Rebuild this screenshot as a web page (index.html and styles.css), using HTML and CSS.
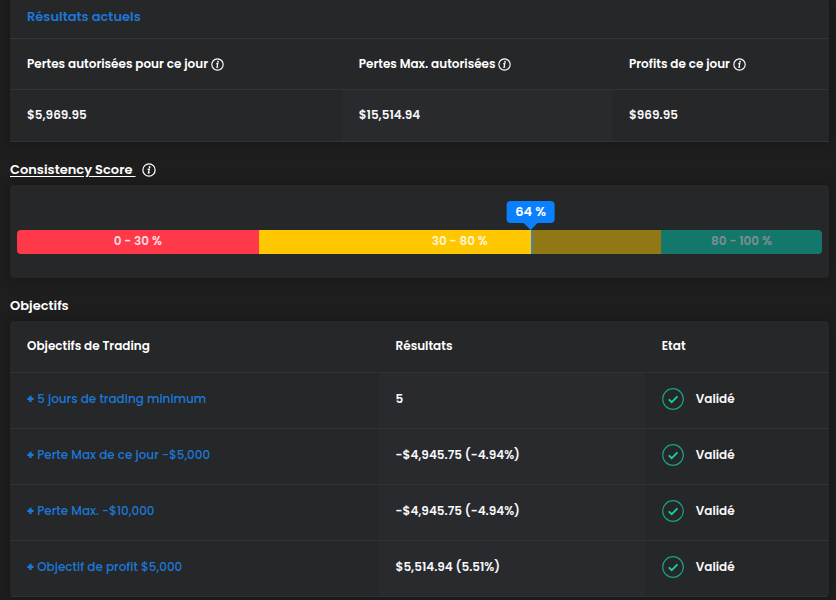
FILE: index.html
```html
<!DOCTYPE html>
<html lang="fr">
<head>
    <meta charset="UTF-8">
    <meta name="viewport" content="width=device-width, initial-scale=1.0">
    <title>Objectifs</title>
    <link rel="stylesheet" href="styles.css">
</head>
<body>
    <svg class="sprite" aria-hidden="true">
        <symbol id="info" viewBox="0 0 16 16">
            <circle cx="8" cy="8" r="7" fill="none" stroke="currentColor" stroke-width="1.4"/>
            <circle cx="8.6" cy="4.6" r="1.1" fill="currentColor"/>
            <path d="M6.4 7.2l2-.4-1.1 4.6 1.6-.4" fill="none" stroke="currentColor" stroke-width="1.4"/>
        </symbol>
        <symbol id="check" viewBox="0 0 22 22">
            <circle cx="11" cy="11" r="10.3" fill="none" stroke="#1c9c84" stroke-width="1.2"/>
            <path d="M6.8 11.3l2.9 2.9 5.8-5.8" fill="none" stroke="#10d5a5" stroke-width="1.8"/>
        </symbol>
    </svg>

    <div class="container">
        <section class="card card-results">
            <h2 class="card-title">Résultats actuels</h2>
            <table class="results">
                <thead>
                    <tr>
                        <th>Pertes autorisées pour ce jour <svg class="info"><use href="#info"/></svg></th>
                        <th>Pertes Max. autorisées <svg class="info"><use href="#info"/></svg></th>
                        <th>Profits de ce jour <svg class="info"><use href="#info"/></svg></th>
                    </tr>
                </thead>
                <tbody>
                    <tr>
                        <td>$5,969.95</td>
                        <td>$15,514.94</td>
                        <td>$969.95</td>
                    </tr>
                </tbody>
            </table>
        </section>

        <h3 class="heading"><span class="underline">Consistency Score&nbsp;</span> <svg class="info info-lg"><use href="#info"/></svg></h3>
        <section class="card card-score">
            <div class="bar">
                <div class="part low" style="width: 30%">0 - 30 %</div>
                <div class="part mid" style="width: 50%">30 - 80 %</div>
                <div class="part high" style="width: 20%">80 - 100 %</div>
                <div class="rest" style="left: 63.8%"></div>
                <div class="score" style="left: 63.8%">64 %</div>
            </div>
        </section>

        <h3 class="heading">Objectifs</h3>
        <section class="card">
            <table class="goals">
                <thead>
                    <tr>
                        <th>Objectifs de Trading</th>
                        <th>Résultats</th>
                        <th>Etat</th>
                    </tr>
                </thead>
                <tbody>
                    <tr>
                        <td><a href="#"><b>+</b> 5 jours de trading minimum</a></td>
                        <td>5</td>
                        <td><div class="state"><svg class="check"><use href="#check"/></svg>Validé</div></td>
                    </tr>
                    <tr>
                        <td><a href="#"><b>+</b> Perte Max de ce jour -$5,000</a></td>
                        <td>-$4,945.75 (-4.94%)</td>
                        <td><div class="state"><svg class="check"><use href="#check"/></svg>Validé</div></td>
                    </tr>
                    <tr>
                        <td><a href="#"><b>+</b> Perte Max. -$10,000</a></td>
                        <td>-$4,945.75 (-4.94%)</td>
                        <td><div class="state"><svg class="check"><use href="#check"/></svg>Validé</div></td>
                    </tr>
                    <tr>
                        <td><a href="#"><b>+</b> Objectif de profit $5,000</a></td>
                        <td>$5,514.94 (5.51%)</td>
                        <td><div class="state"><svg class="check"><use href="#check"/></svg>Validé</div></td>
                    </tr>
                </tbody>
            </table>
        </section>
    </div>
</body>
</html>
```
FILE: styles.css
```css
* {
    box-sizing: border-box;
}
body {
    margin: 0;
    background-color: #1e1e1e;
    color: #f8f8fa;
    font-family: Poppins, Inter, sans-serif;
    font-size: 12px;
    font-weight: 600;
    line-height: 18px;
}
.sprite {
    display: none;
}
.container {
    padding: 0 7px 4px 10px;
}
.card {
    background-color: #262729;
    border-radius: 4px;
    box-shadow: 0 0 12px rgba(0, 0, 0, 0.3);
    overflow: hidden;
}
.card-results {
    border-radius: 0;
}
.card-title {
    margin: 0;
    padding: 7px 17px 11px;
    border-bottom: 1px solid #36373a;
    color: #1b78d8;
    font-size: 13px;
    font-weight: 600;
    line-height: 20px;
}
.heading {
    display: flex;
    align-items: center;
    margin: 0;
    padding: 17px 0 5px;
    color: #fff;
    font-size: 13px;
    font-weight: 600;
    line-height: 21px;
}
.underline {
    text-decoration: underline;
    text-underline-offset: 2px;
}
.info {
    width: 13px;
    height: 13px;
    vertical-align: -3px;
}
.info-lg {
    width: 14px;
    height: 14px;
    margin-left: 6px;
}
table {
    width: 100%;
    border-collapse: separate;
    border-spacing: 0;
    table-layout: fixed;
}
th,
td {
    height: 51px;
    padding: 0 17px 2px;
    border-bottom: 1px solid #323336;
    text-align: left;
    white-space: nowrap;
}
th {
    color: #fff;
    font-weight: 600;
}
td:nth-child(2) {
    background-color: #292a2e;
}
.results th {
    padding-bottom: 0;
}
.results th:nth-child(1) {
    width: 40.5%;
}
.results th:nth-child(2) {
    width: 33%;
}
.results td {
    height: 52px;
}
.goals th {
    height: 52px;
}
.goals th:nth-child(1) {
    width: 45%;
}
.goals th:nth-child(2) {
    width: 32.5%;
}
.goals td {
    height: 56px;
    padding-bottom: 3px;
}
a {
    color: #1b78d8;
    font-weight: 500;
    text-decoration: none;
}
a b {
    font-weight: 800;
}
.state {
    display: flex;
    align-items: center;
    gap: 12px;
}
.check {
    width: 22px;
    height: 22px;
}
/* score bar */
.card-score {
    padding: 45px 7px 24px;
}
.bar {
    display: flex;
    position: relative;
}
.part {
    height: 24px;
    color: rgba(255, 255, 255, 0.85);
    line-height: 22px;
    text-align: center;
}
.low {
    background-color: #ff384a;
    border-radius: 4px 0 0 4px;
}
.mid {
    background-color: #ffc700;
}
.high {
    background-color: #00c7ad;
    border-radius: 0 4px 4px 0;
}
.rest {
    position: absolute;
    top: 0;
    right: 0;
    bottom: 0;
    border-left: 2px solid #3f86b5;
    background-color: rgba(38, 39, 41, 0.5);
}
.score {
    position: absolute;
    bottom: 31px;
    padding: 1px 9px;
    border-radius: 4px;
    background-color: #0a80ff;
    color: #fff;
    font-size: 13px;
    line-height: 20px;
    white-space: nowrap;
    transform: translateX(-50%);
}
.score::after {
    content: "";
    position: absolute;
    top: 100%;
    left: 50%;
    border: 7px solid transparent;
    border-top-color: #0a80ff;
    border-bottom: 0;
    transform: translateX(-50%);
}
```
